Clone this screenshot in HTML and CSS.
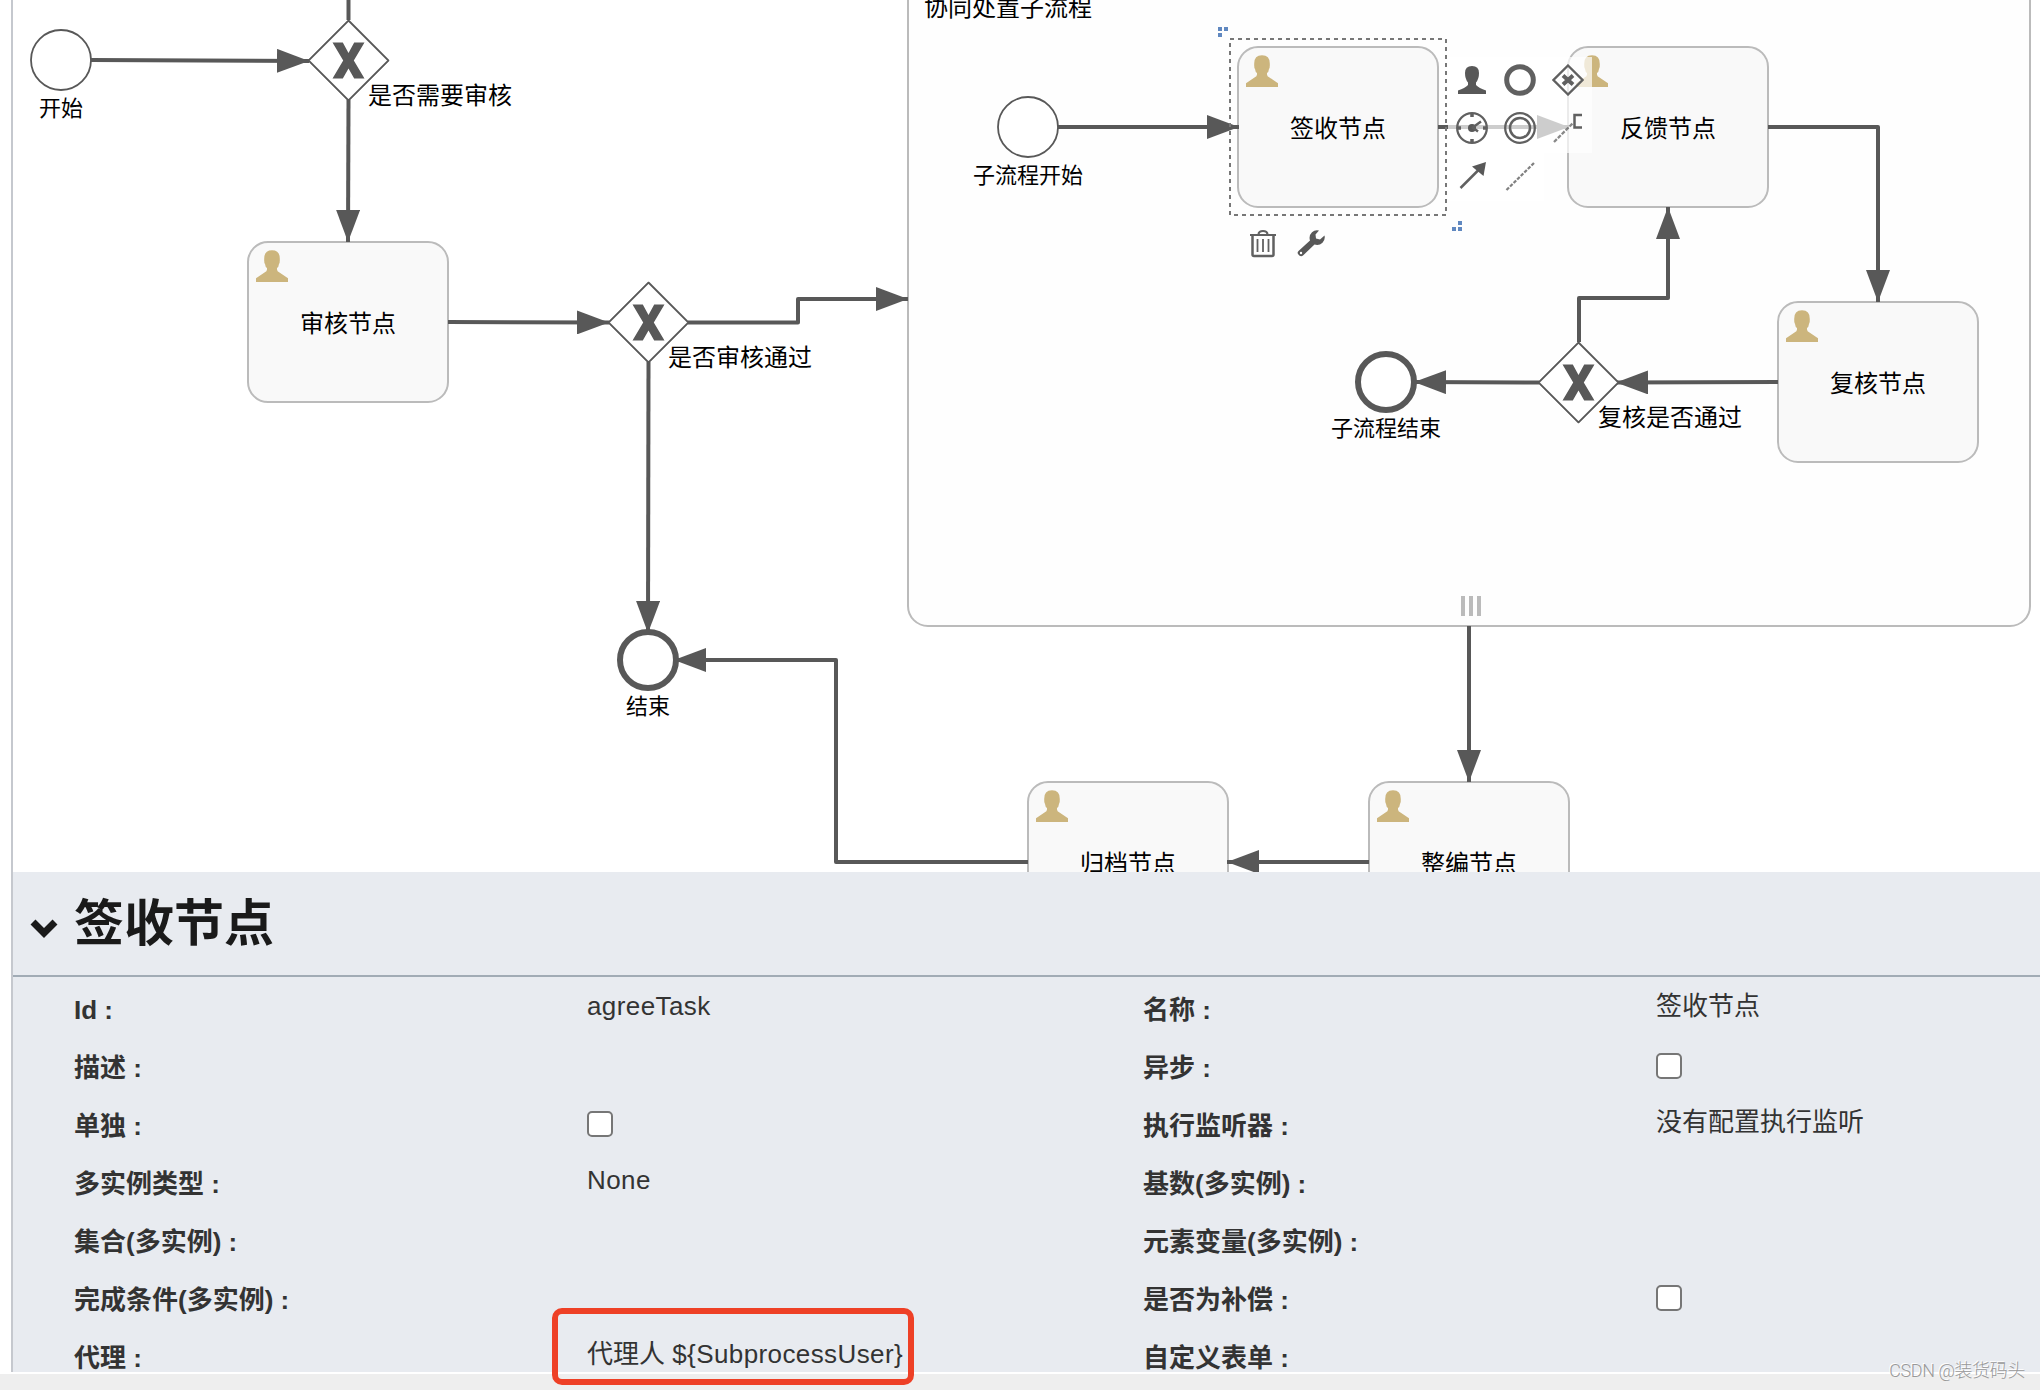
FILE: index.html
```html
<!DOCTYPE html>
<html lang="zh-CN">
<head>
  <meta charset="UTF-8" />
  <meta name="viewport" content="width=device-width, initial-scale=1.0"/>
  <title>流程设计器</title>
  <link rel="stylesheet" href="styles.css">
</head>
<body>
  <div class="editor">

    <!-- Canvas -->
    <div class="canvas">
      <svg class="diagram" width="2027" height="872" viewBox="13 0 2027 872">
        <defs>
          <marker id="arrow" markerUnits="userSpaceOnUse" markerWidth="32" markerHeight="24" refX="32" refY="12" orient="auto">
            <path d="M0 0L32 12L0 24Z" fill="#585858"/>
          </marker>
          <symbol id="user" viewBox="0 0 32 32">
            <path d="M0 32V28.3L8.500 22.500Q11 21.500 11 19.500V18Q9.300 17 9 14Q8 13 8.200 9Q8 0.300 16 0.300T23.800 9Q24 13 23 14Q22.700 17 21 18V19.500Q21 21.500 23.500 22.500L32 28.300V32Z"/>
          </symbol>
          <symbol id="gateway" viewBox="0 0 82 82">
            <path class="thin" d="M41 1L81 41L41 81L1 41Z"/>
            <path class="solid" d="M25 23H35.300L41 33.500L46.700 23H57L46.300 41L57 59H46.700L41 49L35.300 59H25L35.700 41Z"/>
          </symbol>
        </defs>

        <rect class="subprocess" x="908" y="-100" width="1122" height="726" rx="20"/>
        <text x="924" y="16">协同处置子流程</text>
        <g class="multi">
          <rect x="1461" y="596" width="4" height="20"/>
          <rect x="1469" y="596" width="4" height="20"/>
          <rect x="1477" y="596" width="4" height="20"/>
        </g>

        <!-- Tasks -->
        <g class="task">
          <rect x="248" y="242" width="200" height="160" rx="20"/>
          <rect x="1238" y="47" width="200" height="160" rx="20"/>
          <rect x="1568" y="47" width="200" height="160" rx="20"/>
          <rect x="1778" y="302" width="200" height="160" rx="20"/>
          <rect x="1028" y="782" width="200" height="160" rx="20"/>
          <rect x="1369" y="782" width="200" height="160" rx="20"/>
        </g>
        <g class="task-icon">
          <use href="#user" x="256" y="250" width="32" height="32"/>
          <use href="#user" x="1246" y="55" width="32" height="32"/>
          <use href="#user" x="1576" y="55" width="32" height="32"/>
          <use href="#user" x="1786" y="310" width="32" height="32"/>
          <use href="#user" x="1036" y="790" width="32" height="32"/>
          <use href="#user" x="1377" y="790" width="32" height="32"/>
        </g>

        <!-- Flows -->
        <g class="flow">
          <path d="M91 60L309 61"/>
          <path class="plain" d="M348.500 0V20"/>
          <path d="M348.500 100L348 242"/>
          <path d="M448 322L609 322.500"/>
          <path d="M688 322.500H798V299H908"/>
          <path d="M648.500 362L648 633"/>
          <path d="M1028 862H836V660H674"/>
          <path d="M1369 862H1227"/>
          <path d="M1469 626V782"/>
          <path d="M1058 127H1239"/>
          <path d="M1438 127H1569"/>
          <path d="M1768 127H1878V302"/>
          <path d="M1778 382L1616 382.500"/>
          <path d="M1539 382.500L1414 382"/>
          <path d="M1579 342V298H1668V207"/>
        </g>

        <!-- Events and gateways -->
        <circle class="thin" cx="61" cy="60" r="30"/>
        <circle class="thin" cx="1028" cy="127" r="30"/>
        <circle class="thick" cx="648" cy="660" r="28"/>
        <circle class="thick" cx="1386" cy="382" r="28"/>
        <use href="#gateway" x="307.500" y="19.500" width="82" height="82"/>
        <use href="#gateway" x="607.500" y="281.500" width="82" height="82"/>
        <use href="#gateway" x="1537.500" y="341.500" width="82" height="82"/>

        <!-- Labels -->
        <g class="middle">
          <text x="348" y="332">审核节点</text>
          <text x="1338" y="137">签收节点</text>
          <text x="1668" y="137">反馈节点</text>
          <text x="1878" y="392">复核节点</text>
          <text x="1128" y="872">归档节点</text>
          <text x="1469" y="872">整编节点</text>
          <g class="small">
            <text x="61" y="116">开始</text>
            <text x="648" y="714">结束</text>
            <text x="1028" y="183">子流程开始</text>
            <text x="1386" y="436">子流程结束</text>
          </g>
        </g>
        <text x="368" y="104">是否需要审核</text>
        <text x="668" y="366">是否审核通过</text>
        <text x="1598" y="426">复核是否通过</text>

        <!-- Selection -->
        <rect class="selection" x="1230" y="39" width="216" height="176"/>
        <path class="handle" d="M1218 27h4v4h-4zM1224 27h4v4h-4zM1218 33h4v4h-4zM1458 221h4v4h-4zM1452 227h4v4h-4zM1458 227h4v4h-4z"/>
        <path class="veil" d="M1448 57H1592V153H1544V201H1448Z"/>

        <g class="tools">
          <svg x="1456" y="64" width="32" height="32" viewBox="0 0 32 32">
            <path class="solid" d="M2 30V26.500Q9 24 12 21V18.500Q9 15 9 9Q9 2 16 2T23 9Q23 15 20 18.500V21Q23 24 30 26.500V30Z"/>
          </svg>
          <svg x="1504" y="64" width="32" height="32" viewBox="0 0 32 32">
            <circle cx="16" cy="16" r="13.300" stroke-width="5"/>
          </svg>
          <svg x="1552" y="64" width="32" height="32" viewBox="0 0 32 32">
            <path d="M16 1.500L30.500 16L16 30.500L1.500 16Z" stroke-width="2.300"/>
            <path d="M11 11.500L21 20.500M21 11.500L11 20.500" stroke-width="4"/>
          </svg>
          <svg x="1456" y="112" width="32" height="32" viewBox="0 0 32 32">
            <circle cx="16" cy="16" r="14.800" stroke-width="2.300"/>
            <path d="M16 1V5M16 27V31M1 16H5M27 16H31" stroke-width="3.500"/>
            <circle class="solid" cx="16" cy="16" r="4"/>
            <path d="M16 16L25 9.500M16 15L22 19.500" stroke-width="2.500"/>
          </svg>
          <svg x="1504" y="112" width="32" height="32" viewBox="0 0 32 32">
            <circle cx="16" cy="16" r="14.800" stroke-width="2.300"/>
            <circle cx="16" cy="16" r="10" stroke-width="2.500"/>
          </svg>
          <svg x="1552" y="112" width="32" height="32" viewBox="0 0 32 32">
            <path d="M2 30L21 11" stroke-width="2.300" stroke-dasharray="4 1.500" opacity=".75"/>
            <path d="M30 3H22.500V15.500H30" stroke-width="2.500"/>
          </svg>
          <svg x="1456" y="160" width="32" height="32" viewBox="0 0 32 32">
            <path d="M4.500 28L23 9.500" stroke-width="2.500"/>
            <path class="solid" d="M30 2L27.500 16L16 6.500Z"/>
          </svg>
          <svg x="1504" y="160" width="32" height="32" viewBox="0 0 32 32">
            <path d="M2.500 30L31 2" stroke-width="2.300" stroke-dasharray="3.500 1.500" opacity=".8"/>
          </svg>
          <svg x="1247" y="227" width="32" height="32" viewBox="0 0 32 32">
            <path d="M3 8H29M11.500 7Q12 4 16 4T20.500 7" stroke-width="2.200"/>
            <path d="M5.500 8V27.500Q5.500 29 7 29H25Q26.500 29 26.500 27.500V8" stroke-width="2.500"/>
            <path d="M10.500 12V25M16 12V25M21.500 12V25" stroke-width="1.800"/>
          </svg>
          <svg x="1295" y="227" width="32" height="32" viewBox="0 0 32 32">
            <path class="solid" d="M3 27Q2 25.500 3.500 24L15 13.500Q13.500 8.500 17 5.200Q20 2.500 24 3.500L20.500 7.500L21 11.500L25 12.500L29.500 8.500Q30.500 12.500 27.500 15.700Q24 19 19.500 17.500L8 28.500Q5.500 30.500 3 27Z"/>
            <circle cx="6" cy="26" r="1.200" fill="#fff" stroke="none"/>
          </svg>
        </g>
      </svg>
    </div>

    <!-- Properties -->
    <div class="panel">
      <div class="panel-header">
        <svg class="chevron" width="28" height="20" viewBox="0 0 28 20">
          <path d="M3 4L14 15L25 4" fill="none" stroke="#1a1a1a" stroke-width="7"/>
        </svg>
        <h2>签收节点</h2>
      </div>
      <div class="properties">
        <div class="label">Id :</div><div class="value latin">agreeTask</div>
        <div class="label">名称 :</div><div class="value">签收节点</div>
        <div class="label">描述 :</div><div class="value"></div>
        <div class="label">异步 :</div><div class="value"><input type="checkbox"></div>
        <div class="label">单独 :</div><div class="value"><input type="checkbox"></div>
        <div class="label">执行监听器 :</div><div class="value">没有配置执行监听</div>
        <div class="label">多实例类型 :</div><div class="value latin">None</div>
        <div class="label">基数(多实例) :</div><div class="value"></div>
        <div class="label">集合(多实例) :</div><div class="value"></div>
        <div class="label">元素变量(多实例) :</div><div class="value"></div>
        <div class="label">完成条件(多实例) :</div><div class="value"></div>
        <div class="label">是否为补偿 :</div><div class="value"><input type="checkbox"></div>
        <div class="label">代理 :</div><div class="value assignee">代理人 <span class="latin">${SubprocessUser}</span><span class="highlight"></span></div>
        <div class="label">自定义表单 :</div><div class="value"></div>
      </div>
    </div>
  </div>

  <div class="bottom-bar"></div>
  <div class="watermark">CSDN @装货码头</div>
</body>
</html>
```
FILE: styles.css
```css
* {
  box-sizing: border-box;
}

body {
  margin: 0;
  height: 1390px;
  display: flex;
  flex-direction: column;
  position: relative;
  overflow: hidden;
  background: #fff;
  color: #333;
  font-family: "Liberation Sans", "Noto Sans CJK SC", sans-serif;
}

.editor {
  height: 1372px;
  margin-left: 11px;
  border-left: 2px solid #c5c8ce;
  display: flex;
  flex-direction: column;
}

/* diagram */
.canvas {
  height: 872px;
  flex: none;
}

.diagram {
  display: block;
}

.diagram text {
  font-size: 24px;
  fill: #000;
}

.diagram .small text {
  font-size: 22px;
}

.middle {
  text-anchor: middle;
}

.subprocess {
  fill: #fefefe;
  stroke: #bbb;
  stroke-width: 2;
}

.task rect {
  fill: #f9f9f9;
  stroke: #bbb;
  stroke-width: 2;
}

.task-icon {
  fill: #ccb57d;
}

.multi {
  fill: #bbb;
}

.flow path {
  fill: none;
  stroke: #585858;
  stroke-width: 4;
  stroke-linejoin: round;
  marker-end: url(#arrow);
}

.flow .plain {
  marker-end: none;
}

.thin {
  fill: #fff;
  stroke: #585858;
  stroke-width: 1.8;
}

.thick {
  fill: #fff;
  stroke: #585858;
  stroke-width: 6;
}

.solid {
  fill: #585858;
  stroke: none;
}

.selection {
  fill: none;
  stroke: #777;
  stroke-width: 2;
  stroke-dasharray: 4 4;
}

.handle {
  fill: #6088c0;
}

.veil {
  fill: #fff;
  opacity: 0.7;
}

.tools {
  fill: none;
  stroke: #606060;
}

/* properties panel */
.panel {
  flex: 1;
  min-height: 0;
  background: #e8ebf0;
}

.panel-header {
  height: 105px;
  display: flex;
  align-items: center;
  gap: 16px;
  padding: 1px 0 0 17px;
  border-bottom: 2px solid #a1abb5;
}

.panel-header h2 {
  margin: 0;
  color: #1a1a1a;
  font-size: 50px;
  line-height: 60px;
}

.chevron {
  margin-top: 8px;
}

.properties {
  display: grid;
  grid-template-columns: 513px 556px 513px 1fr;
  grid-auto-rows: 58px;
  padding: 4px 0 0 61px;
  font-size: 26px;
  line-height: 58px;
  white-space: nowrap;
}

.label {
  font-weight: bold;
}

.value {
  margin-top: -4px;
}

.latin {
  letter-spacing: 0.4px;
}

.value input {
  appearance: none;
  display: block;
  width: 26px;
  height: 26px;
  margin: 18px 0 0;
  border: 2px solid #767676;
  border-radius: 5px;
  background: #fff;
}

.assignee {
  position: relative;
}

.highlight {
  position: absolute;
  left: -35px;
  top: -17px;
  width: 362px;
  height: 77px;
  border: 6px solid #ee4026;
  border-radius: 10px;
}

.bottom-bar {
  height: 16px;
  margin-top: 2px;
  background: #eee;
}

.watermark {
  position: absolute;
  right: 15px;
  bottom: 5px;
  color: #999;
  font-family: Roboto, "Noto Sans CJK SC", sans-serif;
  font-size: 18px;
  font-weight: 300;
  letter-spacing: -0.4px;
  line-height: 28px;
  text-shadow: -1px -1px 0 #fff;
}
```
